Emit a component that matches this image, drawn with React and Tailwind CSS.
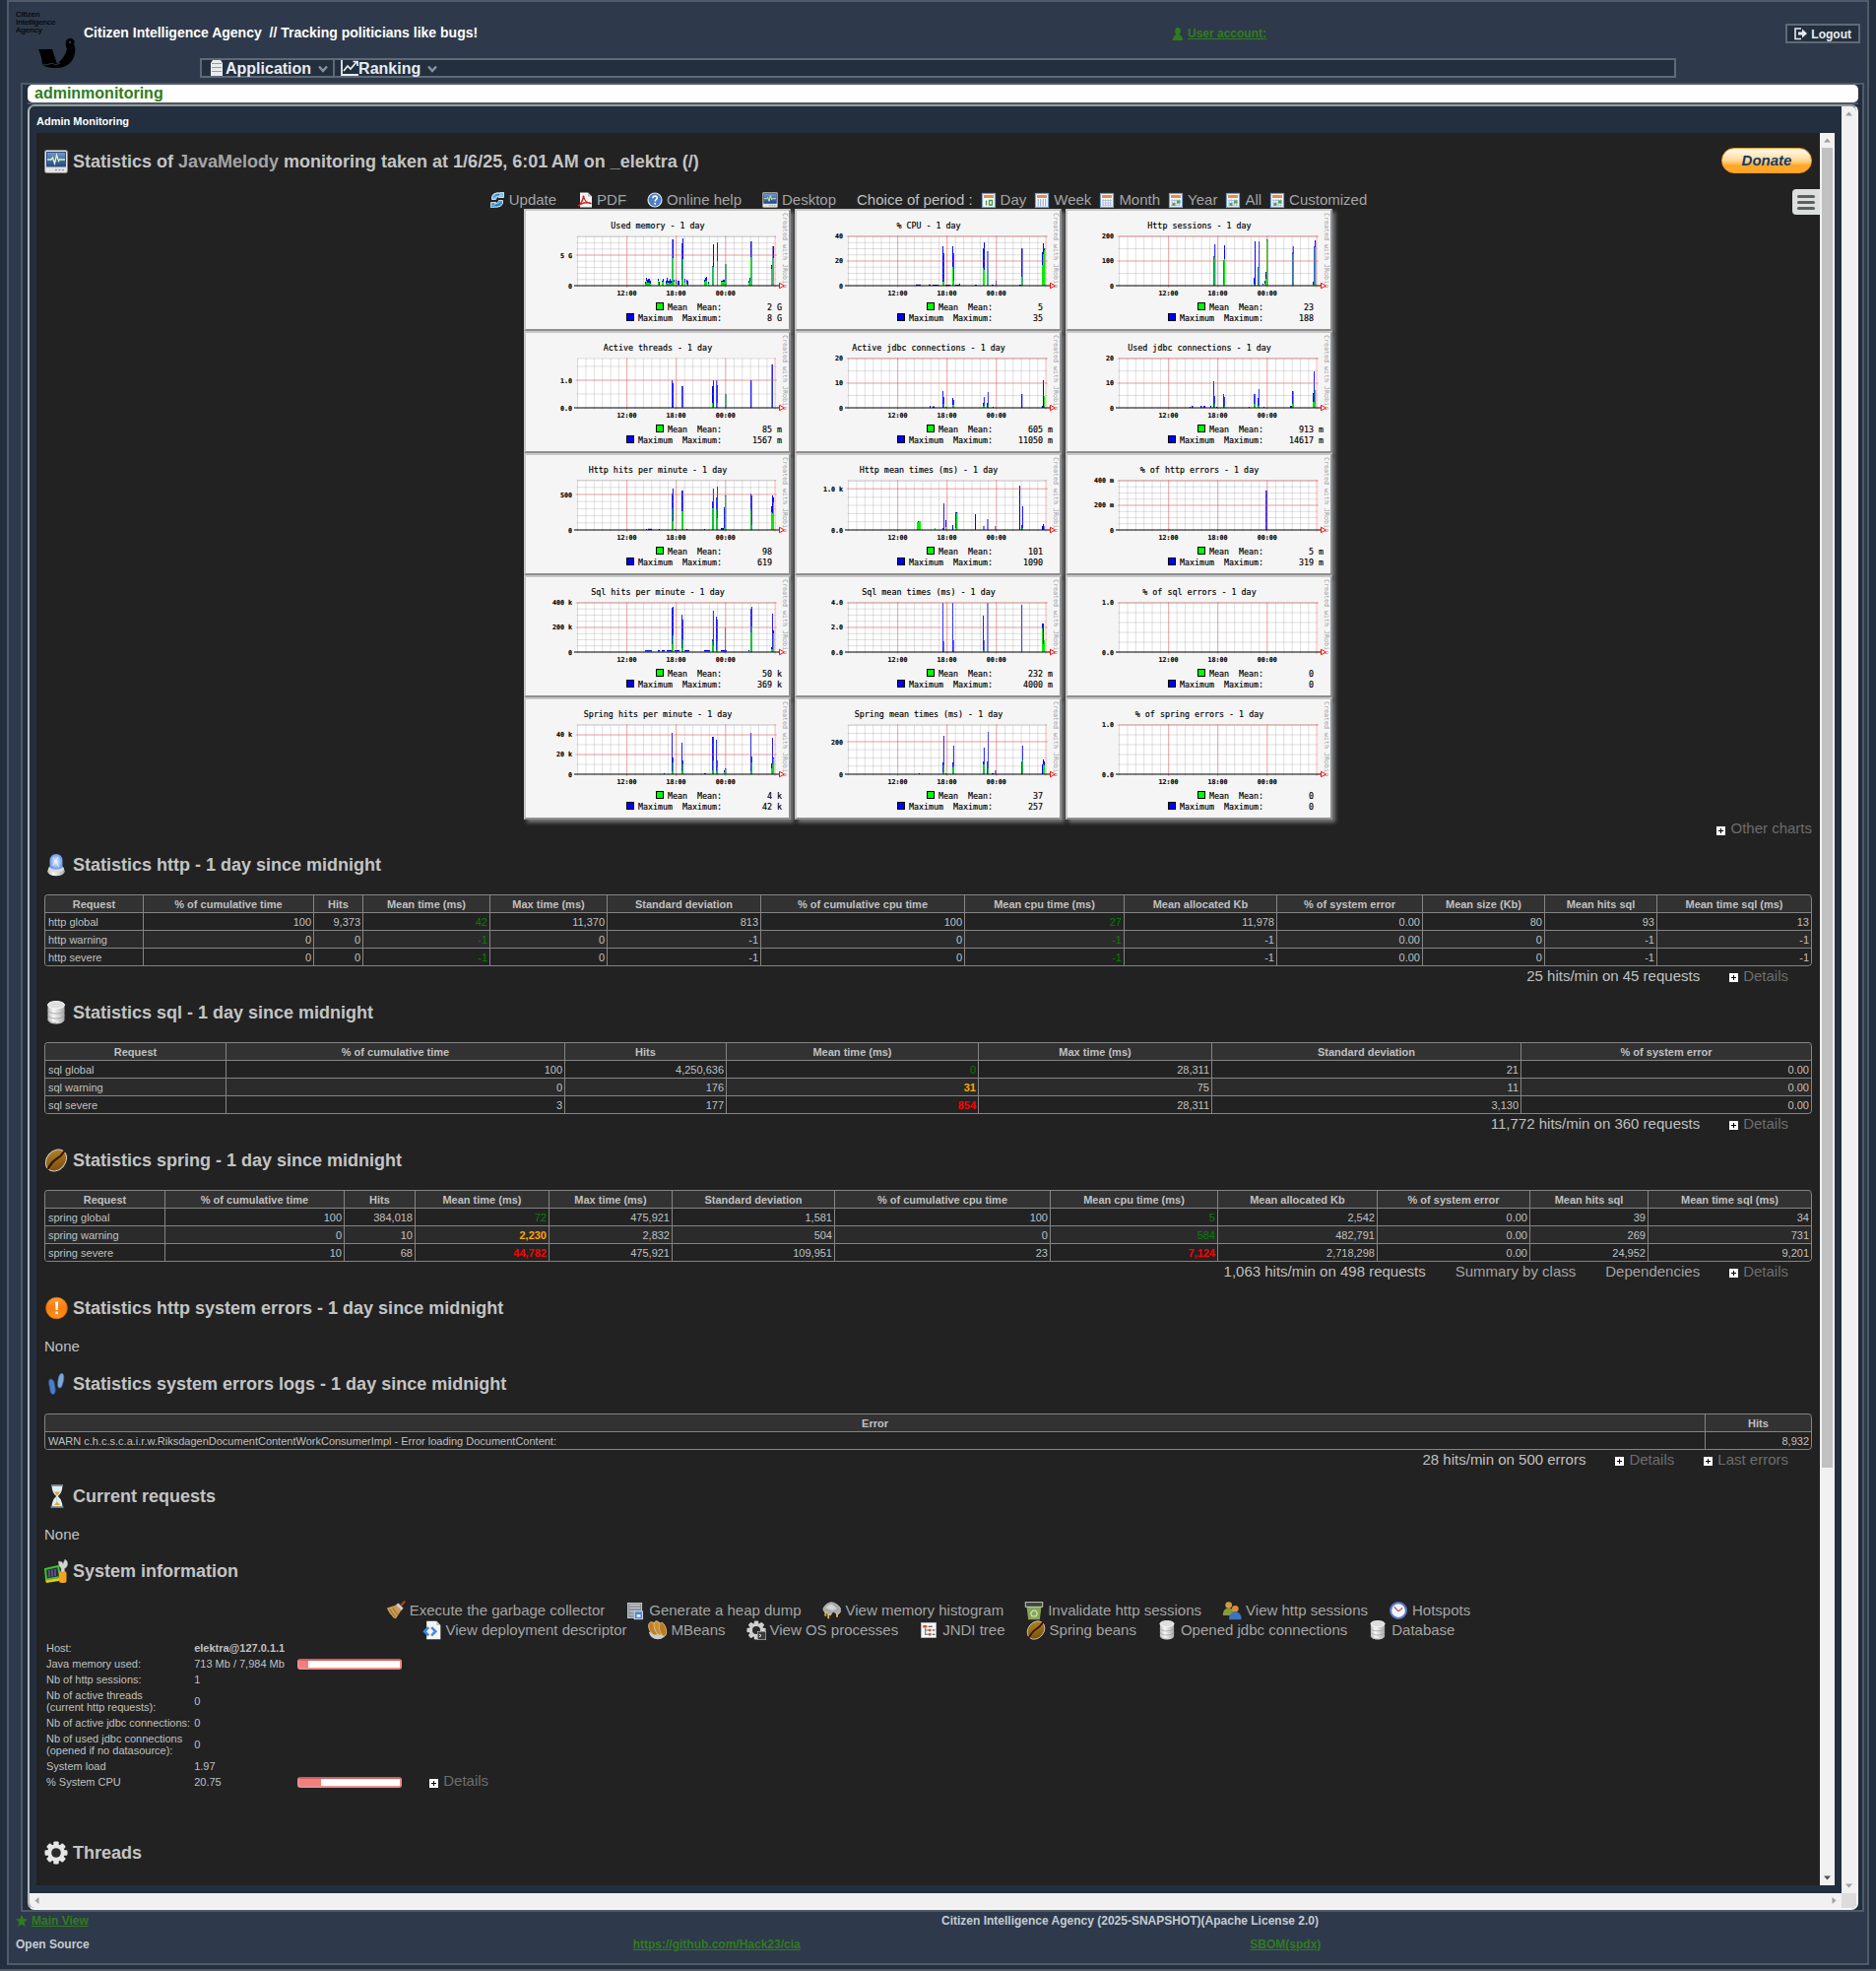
import React from "react";

/* ---------- icons ---------- */

const Svg = ({ className, box = "0 0 16 16", children }) => (
  <svg viewBox={box} className={className} aria-hidden="true">
    {children}
  </svg>
);

const Gradients = () => (
  <svg className="absolute h-0 w-0" aria-hidden="true">
    <defs>
      <linearGradient id="silver" x1="0" x2="1">
        <stop offset="0" stopColor="#bdbdbd" />
        <stop offset="0.35" stopColor="#f7f7f7" />
        <stop offset="1" stopColor="#a9a9a9" />
      </linearGradient>
      <linearGradient id="screen" x1="0" y1="0" x2="0" y2="1">
        <stop offset="0" stopColor="#6f9bd0" />
        <stop offset="1" stopColor="#1f4a86" />
      </linearGradient>
      <linearGradient id="bean" x1="0" y1="0" x2="1" y2="1">
        <stop offset="0" stopColor="#b98a2c" />
        <stop offset="1" stopColor="#6e4708" />
      </linearGradient>
      <linearGradient id="orange" x1="0" y1="0" x2="0" y2="1">
        <stop offset="0" stopColor="#ff9a3c" />
        <stop offset="0.5" stopColor="#f57c10" />
        <stop offset="1" stopColor="#ff9420" />
      </linearGradient>
      <radialGradient id="blueglow">
        <stop offset="0" stopColor="#eaf4ff" />
        <stop offset="1" stopColor="#6a9be8" />
      </radialGradient>
    </defs>
  </svg>
);

const MonitorIcon = ({ className }) => (
  <Svg className={className} box="0 0 24 24">
    <rect x="0.5" y="0.5" width="23" height="23" rx="2" fill="#e4e4e0" stroke="#8d8d8d" />
    <rect x="2.5" y="2.5" width="19" height="14.5" fill="url(#screen)" stroke="#2c4f86" />
    <path d="M3 10h4l1.5-2 2 6 2-8.500 2 6 1-1.500H21" fill="none" stroke="#e6f3b0" strokeWidth="1.300" />
    <path d="M11 20.500h2M14.500 20.500h2M18 20.500h2" stroke="#999" strokeWidth="1.500" />
  </Svg>
);

const UpdateIcon = ({ className }) => (
  <Svg className={className}>
    <path d="M2.500 7.500V4.500Q4 0.800 8 0.800h3.500L11.500 0 14.500 0v5.500H9l1.500-1.700Q7 3.800 6.500 7.500z" fill="#7cc4ee" stroke="#e8f6ff" strokeWidth="0.800" />
    <path d="M13.500 8.500v3Q12 15.200 8 15.200H4.500V16H1.500v-5.500H7l-1.500 1.700Q9 12.200 9.500 8.500z" fill="#4aa3dc" stroke="#e8f6ff" strokeWidth="0.800" />
    <path d="M4.500 5Q6 2.500 10 2.500M11.500 11Q10 13.500 6 13.500" fill="none" stroke="#17608f" strokeWidth="1" />
  </Svg>
);

const PdfIcon = ({ className }) => (
  <Svg className={className}>
    <path d="M3 0.500h8L15 4.500V15.500H3z" fill="#f4f4f4" />
    <path d="M11 0.500 15 4.500H11z" fill="#bdbdbd" />
    <path d="M1 14C4 12.500 6.500 7 6.500 3.500M6.500 3.500C7 8 10 11.500 14.500 11.500M1 14C4 11 10 9.800 14.500 11.500" fill="none" stroke="#d3201c" strokeWidth="1.400" />
  </Svg>
);

const HelpIcon = ({ className }) => (
  <Svg className={className}>
    <circle cx="8" cy="8" r="7" fill="#4d7fc4" stroke="#dfe8f5" strokeWidth="1.200" />
    <path d="M5.800 6.200Q6 4 8.200 4 10.400 4.100 10.300 6 10.200 7 9 7.800 8.200 8.400 8.200 9.500" fill="none" stroke="#fff" strokeWidth="1.600" />
    <circle cx="8.200" cy="11.800" r="1" fill="#fff" />
  </Svg>
);

const CalendarIcon = ({ className, kind }) => (
  <Svg className={className}>
    <rect x="1.500" y="1.500" width="13" height="14" fill="#fff" stroke="#6f9fd8" strokeWidth="1.200" />
    <rect x="3" y="3" width="10" height="3" fill="#f08a45" />
    {kind === "day" && <path d="M5.500 8.500v5M8.500 8.500h3v4.500h-3z" fill="none" stroke="#3d9a3d" strokeWidth="1.300" />}
    {kind === "week" && <path d="M4.200 7v7.500M6.700 7v7.500M9.200 7v7.500M11.700 7v7.500" stroke="#8fa9d4" strokeWidth="1.100" />}
    {(kind === "month" || kind === "year") && (
      <path d="M4.200 7v7.500M6.700 7v7.500M9.200 7v7.500M11.700 7v7.500M3 8.500h10M3 11h10M3 13.300h10" stroke="#a9bce0" strokeWidth="0.900" />
    )}
    {kind === "year" && <path d="M4.500 11h3v3h-3zM9 8.500h3.500v3H9z" fill="#53a753" />}
  </Svg>
);

const PlusIcon = () => (
  <Svg className="mt-1 h-[9px] w-[9px]" box="0 0 9 9">
    <rect width="9" height="9" fill="#fff" />
    <path d="M4.500 2v5M2 4.500h5" stroke="#000" strokeWidth="1" />
  </Svg>
);

const BeaconIcon = ({ className }) => (
  <Svg className={className} box="0 0 24 24">
    <ellipse cx="12" cy="18.500" rx="8.800" ry="4.800" fill="url(#silver)" />
    <ellipse cx="12" cy="16" rx="8" ry="3.800" fill="#dcdcdc" />
    <path d="M5.500 15V7.500Q6 1 12 1T18.500 7.500V15Q12 18.500 5.500 15z" fill="url(#blueglow)" />
    <path d="M9 4.500 15 14M14 4 8.500 13" stroke="#fff" strokeWidth="1" opacity="0.700" />
  </Svg>
);

const DatabaseIcon = ({ className }) => (
  <Svg className={className} box="0 0 24 24">
    <path d="M3.500 4v15.500Q5 23.500 12 23.500T20.500 19.500V4z" fill="url(#silver)" />
    <path d="M3.500 9.500Q5 13 12 13T20.500 9.500M3.500 14.500Q5 18 12 18T20.500 14.500M3.500 19Q5 22.500 12 22.500" fill="none" stroke="#9a9a9a" strokeWidth="0.800" />
    <ellipse cx="12" cy="4.200" rx="8.500" ry="3.700" fill="#dedede" stroke="#f7f7f7" />
  </Svg>
);

const BeanIcon = ({ className }) => (
  <Svg className={className} box="0 0 24 24">
    <ellipse cx="12" cy="12" rx="9.500" ry="12" transform="rotate(40 12 12)" fill="url(#bean)" stroke="#d9cbb8" strokeWidth="1" />
    <path d="M20.500 2.500Q17 8 12.500 10.500T3.500 21" fill="none" stroke="#3a1202" strokeWidth="2.200" />
  </Svg>
);

const AlertIcon = ({ className }) => (
  <Svg className={className} box="0 0 24 24">
    <circle cx="12.500" cy="12" r="10.800" fill="url(#orange)" stroke="#e06c00" strokeWidth="0.800" />
    <path d="M11 5.500h3.200l-.6 8.500h-2z" fill="#fff" />
    <rect x="11.300" y="15.500" width="2.600" height="2.600" fill="#fff" />
  </Svg>
);

const FootstepsIcon = ({ className }) => (
  <Svg className={className} box="0 0 24 24">
    <path d="M17 1.500c2.500-1 3.500 3 2.500 7-.8 3-1.500 8-4 7.500S13.500 11 14 8s1-5.500 3-6.500z" fill="#7ba7dc" stroke="#47689a" strokeWidth="0.700" />
    <path d="M6.500 7C4.500 7 4 10 5 13.500c.8 3 .5 8.500 3.500 9s3-4 2.500-7-.5-8-4.500-8.500z" fill="#4a7fc6" stroke="#28508a" strokeWidth="0.700" />
  </Svg>
);

const HourglassIcon = ({ className }) => (
  <Svg className={className} box="0 0 24 24">
    <path d="M7.500 1.500h11Q18 9 13.800 12 18 15 18.500 22.500h-11Q8 15 12.200 12 8 9 7.500 1.500z" fill="#dfeef5" />
    <path d="M10 7.500h6Q15 9.500 13 11.500 11 9.500 10 7.500zM13 17.500l3 3.500h-6z" fill="#d9a83a" />
    <path d="M12.500 12.500v5" stroke="#b9c8cf" strokeWidth="0.800" />
    <path d="M7 1h12M6.500 23h13" stroke="#8e9698" strokeWidth="1.400" />
  </Svg>
);

const SystemIcon = ({ className }) => (
  <Svg className={className} box="0 0 24 24">
    <path d="M1 10 14 7l2 11-14 2.500z" fill="#2b2b45" stroke="#3fc02c" strokeWidth="2" />
    <path d="M5 11v7M8 10.500v7M11 10v7" stroke="#7a6ba0" strokeWidth="1.200" />
    <path d="M1 21.500 15 19v3L2 24z" fill="#e5c81e" />
    <rect x="15" y="12" width="7.500" height="12" rx="2.500" fill="#f4a41c" />
    <path d="M14.500 2l3 .5 1.500 2L21 0q3.500 2 2.500 6-1 3-3 3.500V13h-3.500V9Q14 7 14.500 2z" fill="#d5d5d5" stroke="#999" strokeWidth="0.600" />
  </Svg>
);

const GearIcon = ({ className, fill = "#e6e6e6" }) => (
  <Svg className={className} box="0 0 24 24">
    {[0, 45, 90, 135].map((a) => (
      <rect key={a} x="9.300" y="0.500" width="5.400" height="23" rx="1.200" fill={fill} transform={`rotate(${a} 12 12)`} />
    ))}
    <circle cx="12" cy="12" r="6.800" fill="none" stroke={fill} strokeWidth="4" />
    <circle cx="12" cy="12" r="4.800" fill="#2a2a2a" />
  </Svg>
);

const BroomIcon = ({ className }) => (
  <Svg className={className} box="0 0 24 24">
    <path d="M1 9 13 5l6 6-7 11q-3 0-5-4-3-2-6-9z" fill="#c99a55" />
    <path d="M4 10l7 10M8 8.500l6 9" stroke="#8a6026" strokeWidth="1" />
    <path d="M12 5l3-2 6 6-2 3z" fill="#cfcfcf" />
    <path d="M18 6l5-5" stroke="#b0451c" strokeWidth="2.600" />
  </Svg>
);

const HeapIcon = ({ className }) => (
  <Svg className={className} box="0 0 24 24">
    <rect x="3" y="3" width="17" height="18" fill="#8d949e" stroke="#d9d9d9" />
    <path d="M5 5.500h13M5 9h13M5 13h6M5 17h5" stroke="#c8c8c8" strokeWidth="1.300" />
    <rect x="11" y="13" width="10" height="9.500" fill="#4e86d6" stroke="#e6eefb" />
    <rect x="14" y="17" width="4.500" height="3" fill="#fff" />
  </Svg>
);

const MemoryIcon = ({ className }) => (
  <Svg className={className} box="0 0 24 24">
    <path d="M4 13v6M7.500 15v7M18 14v6" stroke="#e8b93a" strokeWidth="2.200" />
    <path d="M1 10Q4 3 11 2 18 3 22 9v5l-3 3-6-4-3 5-8-5z" fill="#a9a9a9" stroke="#dcdcdc" strokeWidth="0.800" />
    <path d="M4 9Q8 4 12 4.500L18 9.500 12 12z" fill="#d3d3d3" />
  </Svg>
);

const BinIcon = ({ className }) => (
  <Svg className={className} box="0 0 24 24">
    <path d="M3 7h18l-2 16H5z" fill="#87a558" />
    <rect x="1.500" y="2" width="21" height="5.500" fill="#3e4438" stroke="#dfe3d8" />
    <path d="M9.500 19 8 15.500 10.500 12h3.500l2 3.500-1.500 3.500z" fill="none" stroke="#cfe2b0" strokeWidth="1.500" />
  </Svg>
);

const UsersIcon = ({ className }) => (
  <Svg className={className} box="0 0 24 24">
    <circle cx="8" cy="5.500" r="4" fill="#d69a3c" />
    <path d="M1 18q0-9 7-9t7 9z" fill="#8a9a3a" />
    <circle cx="16" cy="10" r="4" fill="#d98f34" />
    <path d="M8.500 23q0-9.500 7.500-9.500t7.500 9.500z" fill="#3d74bd" />
  </Svg>
);

const ClockIcon = ({ className }) => (
  <Svg className={className} box="0 0 24 24">
    <circle cx="12" cy="12" r="9.500" fill="#f3f5fb" stroke="#5b78cc" strokeWidth="2.500" />
    <path d="M12 13 7 7.500M12 13l5-4" stroke="#b35a62" strokeWidth="1.500" />
  </Svg>
);

const DeployIcon = ({ className }) => (
  <Svg className={className} box="0 0 24 24">
    <path d="M5 1h12l5 5v17H5z" fill="#f4f4f4" />
    <path d="M17 1l5 5h-5z" fill="#c2c2c2" />
    <path d="M7.500 8.500l-5 5 5 5M11 8.500l5 5-5 5" fill="none" stroke="#3f8ae0" strokeWidth="3" />
  </Svg>
);

const MBeansIcon = ({ className }) => (
  <Svg className={className} box="0 0 24 24">
    <path d="M1 14h22q-2 9-11 9T1 14z" fill="#c9ccd2" />
    <ellipse cx="6.500" cy="10" rx="5" ry="8.500" transform="rotate(-25 6.500 10)" fill="#b9812e" stroke="#e2b76a" />
    <ellipse cx="12.500" cy="9.500" rx="4.500" ry="9" transform="rotate(-20 12.500 9.500)" fill="#c48e38" stroke="#ecc479" />
    <ellipse cx="18" cy="11" rx="4" ry="8.500" transform="rotate(-14 18 11)" fill="#b57c29" stroke="#e2b76a" />
  </Svg>
);

const ProcessIcon = ({ className }) => (
  <span className="relative inline-block">
    <GearIcon className={className} fill="#cfcfcf" />
    <svg viewBox="0 0 9 9" className="absolute right-0 bottom-0 h-[9px] w-[9px]" aria-hidden="true">
      <rect width="9" height="9" fill="#3a3a3a" stroke="#ddd" />
      <path d="M2 3l2 1.500L2 6" fill="none" stroke="#fff" />
    </svg>
  </span>
);

const TreeIcon = ({ className }) => (
  <Svg className={className} box="0 0 24 24">
    <rect x="3" y="3" width="18" height="18" fill="#f7f7f7" stroke="#bbb" />
    <path d="M8 9v9M8 12h4M8 17h4" stroke="#555" strokeWidth="1" />
    <path d="M5 6h5v3H5zM12 10.500h3v3h-3zM12 15.500h3v3h-3z" fill="#d2552c" />
    <path d="M11.500 7.500h5M16.500 12h3M16.500 17h3" stroke="#333" strokeWidth="1.300" />
  </Svg>
);

const Logo = () => (
  <svg viewBox="0 0 62 62" className="h-[62px] w-[62px] shrink-0" role="img" aria-label="Citizen Intelligence Agency">
    <g fontFamily="Liberation Sans" fontSize="8" fill="#05070a" stroke="#05070a" strokeWidth="0.200">
      <text x="0" y="8">Citizen</text>
      <text x="0" y="16">Intelligence</text>
      <text x="0" y="24">Agency</text>
    </g>
    <path d="M23 41h14l5 15q8-7 10-15-2-4-1-8 2-4 6-3 4 2 2 6 2 3 1 9-1 6-5 10-5 5-14 5-12 0-14-4-1-9-4-15z" fill="#000" />
    <path d="M28 56q3 2 6 0t7 1l4-2" fill="none" stroke="#3c4856" strokeWidth="0.800" />
    <circle cx="55" cy="34" r="0.900" fill="#4a5666" />
  </svg>
);

/* ---------- charts ---------- */

// Bars are [x, width, height of maximum, height of mean], in pixels above the axis.
const CHARTS = [
  {
    title: "Used memory - 1 day", axis: [["5 G", 31], ["0", 0]], major: [31], step: 6.2, mean: ["2", "G"], max: ["8", "G"],
    bars: [[123, 1, 4, 2], [124, 1, 8, 5], [125, 1, 6, 3], [126, 2, 7, 3], [128, 1, 5, 2], [136, 1, 7, 5], [137, 1, 4, 1], [140, 1, 5, 4], [141, 1, 7, 4], [144, 1, 5, 2], [145, 1, 8, 3], [146, 2, 5, 3], [148, 1, 7, 2], [149, 2, 5, 3], [150.500, 1.500, 47, 28], [152, 1, 6, 4], [154, 1, 6, 2], [156, 2, 5, 1], [160.200, 0.800, 43, 6], [161, 1, 48, 27], [163, 1, 7, 3], [165, 1, 6, 2], [166, 1, 5, 1], [183, 1, 6, 4], [184, 1, 8, 5], [185, 1, 9, 5], [187, 1, 4, 2], [191, 0.700, 20, 19], [192, 1, 42, 19], [196, 1, 44, 25], [200, 2, 5, 4], [202, 2, 6, 4], [204.500, 1, 22, 22], [228, 1, 5, 3], [229, 1, 8, 5], [230, 1.500, 45, 29], [251, 1, 21, 17], [252.500, 1.500, 40, 28]],
  },
  {
    title: "% CPU - 1 day", axis: [["40", 50], ["20", 25], ["0", 0]], major: [25, 50], step: 6.25, mean: ["5", ""], max: ["35", ""],
    bars: [[123, 5, 1.200, 0], [136, 2, 1.200, 0], [140, 6, 1, 0], [150, 1, 40, 4], [151, 0.800, 33, 4], [153, 5, 1, 0], [160, 1, 40, 19], [161, 0.800, 33, 5], [163, 4, 1, 0], [167, 1, 2, 0], [183, 2, 1, 0], [191, 1, 38, 18], [192, 1, 44, 16], [195.500, 1, 35, 13], [200, 2, 1, 0], [204.300, 0.700, 5, 0], [228, 2, 1, 0], [230, 1.500, 38, 9], [251, 1, 34, 21], [252, 1, 43, 32], [253, 1.200, 38, 36]],
  },
  {
    title: "Http sessions - 1 day", axis: [["200", 50], ["100", 25], ["0", 0]], major: [25, 50], step: 12.5, mean: ["23", ""], max: ["188", ""],
    bars: [[150.300, 0.900, 30, 0], [151.200, 1, 42, 29], [160.300, 0.900, 26, 2], [161, 1, 41, 27], [191, 1, 8, 2], [192, 1, 45, 0], [195.300, 0.900, 19, 1], [196.200, 0.900, 45, 18], [200, 1, 2, 1], [202, 1, 5, 2], [203, 1, 14, 7], [204, 1.300, 47, 46], [230, 0.700, 34, 0], [230.700, 1, 40, 32], [251, 1, 4, 1], [252.300, 1, 40, 2], [253.100, 1.100, 46, 39]],
  },
  {
    title: "Active threads - 1 day", axis: [["1.0", 28], ["0.0", 0]], major: [28], step: 14, mean: ["85", "m"], max: ["1567", "m"],
    bars: [[150.200, 1, 28, 0], [151, 0.900, 25, 0], [160.200, 1.500, 22, 1], [191, 1, 22, 5], [192, 0.900, 28, 0], [195.300, 0.900, 28, 0], [196.100, 0.900, 23, 5], [204.500, 1, 14, 13], [230, 1.300, 28, 0], [251.500, 1, 44, 29], [252.300, 0.700, 44, 0]],
  },
  {
    title: "Active jdbc connections - 1 day", axis: [["20", 50], ["10", 25], ["0", 0]], major: [25, 50], step: 12.5, mean: ["605", "m"], max: ["11050", "m"],
    bars: [[137, 1, 2, 0], [140, 2, 1.500, 0], [150, 0.900, 17, 0], [150.900, 0.900, 11, 4], [153, 1, 1, 0], [160, 1, 10, 3], [161, 0.800, 8, 3], [191, 0.900, 5, 2], [191.900, 0.900, 11, 2], [195, 0.900, 5, 0], [195.900, 0.900, 16, 2], [201, 1, 1, 0], [230, 1.300, 14, 0], [251, 1, 2, 0], [252, 1, 28, 0], [253, 1, 12, 12]],
  },
  {
    title: "Used jdbc connections - 1 day", axis: [["20", 50], ["10", 25], ["0", 0]], major: [25, 50], step: 12.5, mean: ["913", "m"], max: ["14617", "m"],
    bars: [[126, 1, 1, 0], [128, 1.500, 2, 0], [137, 1.500, 2, 0], [140, 2, 2, 0], [147, 1, 2, 0], [150, 0.900, 27, 0], [150.900, 0.900, 12, 4], [153, 1, 1, 0], [160, 0.900, 14, 0], [160.900, 0.900, 11, 2], [186, 1, 1, 0], [191.200, 1.500, 14, 4], [195, 0.900, 10, 2], [195.900, 0.900, 19, 2], [201, 1, 1, 0], [228, 2, 2, 0], [230, 1.500, 17, 4], [251, 1, 15, 6], [252, 0.900, 37, 6], [252.900, 1.200, 18, 18]],
  },
  {
    title: "Http hits per minute - 1 day", axis: [["500", 36], ["0", 0]], major: [36], step: 7.2, mean: ["98", ""], max: ["619", ""],
    bars: [[124, 1, 1, 0], [126, 4, 1.200, 0], [137, 1, 1, 0], [150.100, 0.800, 37, 21], [150.900, 1, 42, 9], [153, 1, 1, 0], [160, 1.700, 40, 19], [165, 1, 1, 0], [183, 1, 1, 0], [191, 0.900, 29, 22], [191.900, 0.900, 42, 22], [195.200, 0.800, 33, 21], [196, 0.900, 44, 12], [200, 3, 2, 0], [203, 0.900, 23, 2], [204, 1.200, 35, 34], [230, 0.900, 37, 20], [230.900, 0.900, 35, 5], [251, 1, 24, 18], [252, 1, 35, 17], [253, 1, 33, 28]],
  },
  {
    title: "Http mean times (ms) - 1 day", axis: [["1.0 k", 42], ["0.0", 0]], major: [42], step: 8.3, mean: ["101", ""], max: ["1090", ""],
    bars: [[124, 1, 8, 8], [125, 1, 9, 8], [126, 2, 8.500, 8], [142, 1, 2, 2], [150.200, 0.900, 2, 0], [151, 0.900, 27, 0], [153, 1, 10, 3], [160, 1, 5, 0], [163, 1, 18, 2], [164, 1.200, 18, 17], [183, 1, 16, 0], [191.500, 1, 4, 0], [195.500, 1, 11, 0], [203.500, 0.800, 4, 0], [228, 1, 45, 0], [230, 0.900, 5, 0], [231, 0.900, 24, 2], [251, 2.500, 4, 0], [252, 1, 6, 0]],
  },
  {
    title: "% of http errors - 1 day", axis: [["400 m", 50], ["200 m", 25], ["0", 0]], major: [25, 50], step: 6.25, mean: ["5", "m"], max: ["319", "m"],
    bars: [[203.200, 1.600, 40, 0]],
  },
  {
    title: "Sql hits per minute - 1 day", axis: [["400 k", 50], ["200 k", 25], ["0", 0]], major: [25, 50], step: 6.25, mean: ["50", "k"], max: ["369", "k"],
    bars: [[123, 7, 2, 1.200], [136, 2, 2, 1], [140, 3, 2, 1], [145, 5, 2, 1], [150, 0.900, 45, 8], [150.900, 1, 46, 17], [153, 5, 2, 1], [160, 0.900, 38, 4], [160.900, 0.900, 33, 12], [163, 5, 2, 1], [183, 6, 2, 1], [191, 0.900, 13, 11], [191.900, 0.900, 42, 6], [195, 0.900, 36, 2], [195.900, 0.900, 33, 11], [200, 6, 2, 1], [204.200, 0.600, 25, 0], [228, 1, 2, 1], [230, 0.900, 44, 20], [230.900, 0.900, 46, 26], [251, 1, 5, 3], [252, 0.900, 39, 3], [252.900, 1.200, 22, 19]],
  },
  {
    title: "Sql mean times (ms) - 1 day", axis: [["4.0", 50], ["2.0", 25], ["0.0", 0]], major: [25, 50], step: 6.25, mean: ["232", "m"], max: ["4000", "m"],
    bars: [[150, 0.800, 50, 0], [150.800, 0.800, 11, 0], [160, 0.800, 50, 0], [160.800, 0.800, 12, 0], [191, 0.900, 37, 2], [191.900, 0.700, 12, 2], [195.500, 0.900, 50, 0], [230.200, 0.900, 48, 0], [251, 1, 29, 24], [252, 1, 29, 8], [253, 1, 12, 12]],
  },
  { title: "% of sql errors - 1 day", axis: [["1.0", 50], ["0.0", 0]], major: [50], step: 10, mean: ["0", ""], max: ["0", ""], bars: [] },
  {
    title: "Spring hits per minute - 1 day", axis: [["40 k", 40], ["20 k", 20], ["0", 0]], major: [20, 40], step: 10, mean: ["4", "k"], max: ["42", "k"],
    bars: [[142, 1, 1, 0], [150, 0.900, 42, 3], [150.900, 0.900, 17, 12], [160, 0.900, 32, 3], [160.900, 0.900, 14, 10], [183, 2, 1, 0], [191, 0.900, 38, 4], [191.900, 0.900, 38, 14], [195.200, 0.800, 35, 3], [196, 0.800, 14, 7], [203, 1, 4, 2], [204, 1.300, 6, 5], [230, 0.900, 42, 3], [230.900, 0.900, 18, 12], [251, 1, 11, 6], [252, 0.900, 37, 10], [252.900, 1.200, 17, 16]],
  },
  {
    title: "Spring mean times (ms) - 1 day", axis: [["200", 33], ["0", 0]], major: [33], step: 8.3, mean: ["37", ""], max: ["257", ""],
    bars: [[126, 1, 1, 0], [150, 0.900, 12, 2], [150.900, 0.900, 39, 9], [153, 1, 1, 0], [160, 0.900, 12, 7], [160.900, 0.900, 29, 8], [191, 0.900, 13, 10], [191.900, 0.900, 27, 10], [195, 0.800, 13, 0], [196, 0.800, 43, 6], [200, 2, 1, 0], [203.500, 1, 4, 0], [230, 0.900, 13, 0], [230.900, 0.900, 29, 14], [251, 1, 10, 0], [252, 1, 15, 10], [253, 1, 13, 9]],
  },
  { title: "% of spring errors - 1 day", axis: [["1.0", 50], ["0.0", 0]], major: [50], step: 10, mean: ["0", ""], max: ["0", ""], bars: [] },
];

const u = (px) => px * 1.2;
const BASE = 78;

function Label({ x, y, anchor = "start", size = 10, bold, children }) {
  return (
    <text x={u(x)} y={u(y)} textAnchor={anchor} fontSize={size} fontWeight={bold ? 700 : 400} fill="#000" stroke="#000" strokeWidth="0.200" xmlSpace="preserve">
      {children}
    </text>
  );
}

function Chart({ chart }) {
  const minors = [];
  for (let h = chart.step; h <= 50.5; h += chart.step) minors.push(h);
  return (
    <a
      href="#chart"
      className="block border-2 border-t-[#c8c8c8] border-r-[#909090] border-b-[#909090] border-l-[#c8c8c8] bg-[#f5f5f5] shadow-[3px_3px_4px_#777]"
    >
      <svg viewBox="2.4 2.4 320.4 144" className="block h-[120px] w-[267px]" fontFamily="'DejaVu Sans Mono', monospace" role="img" aria-label={chart.title}>
        <g transform="scale(1.2)">
          <rect x="55" y="28" width="200" height="50" fill="#fff" />
          {chart.bars.map(([x, w, max, mean], i) => (
            <g key={i}>
              <rect x={x} y={BASE - max} width={w} height={max} fill="#0000ff" />
              <rect x={x} y={BASE - mean} width={w} height={mean} fill="#00f000" />
            </g>
          ))}
          <g stroke="#8c8c8c" strokeOpacity="0.350" strokeWidth="0.800">
            {Array.from({ length: 24 }, (_, i) => (
              <line key={i} x1={54.6 + i * 8.36} x2={54.6 + i * 8.36} y1="28" y2="79.500" />
            ))}
            {minors.map((h) => (
              <line key={h} x1="53.500" x2="256.500" y1={BASE - h} y2={BASE - h} />
            ))}
            <line x1="54" x2="256" y1="28" y2="28" />
          </g>
          <g stroke="#ff3c3c" strokeOpacity="0.400" strokeWidth="0.900">
            {[104.6, 154.6, 204.7, 255].map((x) => (
              <line key={x} x1={x} x2={x} y1="27" y2="80" />
            ))}
            {chart.major.map((h) => (
              <line key={h} x1="52.500" x2="257" y1={BASE - h} y2={BASE - h} />
            ))}
          </g>
          <line x1="51" x2="259" y1={BASE} y2={BASE} stroke="#000" strokeWidth="1" />
          <path d="M259.500 75.300 264.500 78 259.500 80.700z" fill="#fff" stroke="#f00" strokeWidth="1" />
          <rect x="134.500" y="95.500" width="7" height="7" fill="#0f0" stroke="#000" />
          <rect x="104.500" y="106.500" width="7" height="7" fill="#00f" stroke="#000" />
        </g>
        <Label x={136} y={20} anchor="middle">{chart.title}</Label>
        {chart.axis.map(([text, h]) => (
          <Label key={text} x={49} y={BASE + 2.5 - h} anchor="end" size={8} bold>{text}</Label>
        ))}
        <Label x={104.6} y={88} anchor="middle" size={8} bold>12:00</Label>
        <Label x={154.6} y={88} anchor="middle" size={8} bold>18:00</Label>
        <Label x={204.7} y={88} anchor="middle" size={8} bold>00:00</Label>
        <Label x={146} y={103}>Mean</Label>
        <Label x={176} y={103}>Mean:</Label>
        <Label x={252} y={103} anchor="end">{chart.mean[0]}</Label>
        <Label x={257} y={103}>{chart.mean[1]}</Label>
        <Label x={116} y={114}>Maximum</Label>
        <Label x={161} y={114}>Maximum:</Label>
        <Label x={252} y={114} anchor="end">{chart.max[0]}</Label>
        <Label x={257} y={114}>{chart.max[1]}</Label>
        <text transform={`translate(${u(262.5)} ${u(4)}) rotate(90)`} fontSize="8" fill="#a0a0a0">Created with JRobin</text>
      </svg>
    </a>
  );
}

/* ---------- statistics tables ---------- */

const LEVEL = { g: "text-[#008000]", o: "font-bold text-[#ffa500]", r: "font-bold text-[#ff0000]" };

const HTTP = {
  widths: [100, 173, 50, 129, 119, 156, 207, 162, 155, 148, 124, 114, 157],
  head: ["Request", "% of cumulative time", "Hits", "Mean time (ms)", "Max time (ms)", "Standard deviation", "% of cumulative cpu time", "Mean cpu time (ms)", "Mean allocated Kb", "% of system error", "Mean size (Kb)", "Mean hits sql", "Mean time sql (ms)"],
  rows: [
    ["http global", "100", "9,373", "g:42", "11,370", "813", "100", "g:27", "11,978", "0.00", "80", "93", "13"],
    ["http warning", "0", "0", "g:-1", "0", "-1", "0", "g:-1", "-1", "0.00", "0", "-1", "-1"],
    ["http severe", "0", "0", "g:-1", "0", "-1", "0", "g:-1", "-1", "0.00", "0", "-1", "-1"],
  ],
};

const SQL = {
  widths: [184, 344, 164, 256, 237, 314, 295],
  head: ["Request", "% of cumulative time", "Hits", "Mean time (ms)", "Max time (ms)", "Standard deviation", "% of system error"],
  rows: [
    ["sql global", "100", "4,250,636", "g:0", "28,311", "21", "0.00"],
    ["sql warning", "0", "176", "o:31", "75", "11", "0.00"],
    ["sql severe", "3", "177", "r:854", "28,311", "3,130", "0.00"],
  ],
};

const SPRING = {
  widths: [122, 182, 72, 136, 125, 165, 219, 170, 162, 155, 120, 166],
  head: ["Request", "% of cumulative time", "Hits", "Mean time (ms)", "Max time (ms)", "Standard deviation", "% of cumulative cpu time", "Mean cpu time (ms)", "Mean allocated Kb", "% of system error", "Mean hits sql", "Mean time sql (ms)"],
  rows: [
    ["spring global", "100", "384,018", "g:72", "475,921", "1,581", "100", "g:5", "2,542", "0.00", "39", "34"],
    ["spring warning", "0", "10", "o:2,230", "2,832", "504", "0", "g:584", "482,791", "0.00", "269", "731"],
    ["spring severe", "10", "68", "r:44,782", "475,921", "109,951", "23", "r:7,124", "2,718,298", "0.00", "24,952", "9,201"],
  ],
};

const LOGS = {
  widths: [1686, 108],
  head: ["Error", "Hits"],
  rows: [["WARN c.h.c.s.c.a.i.r.w.RiksdagenDocumentContentWorkConsumerImpl - Error loading DocumentContent:", "8,932"]],
};

function StatTable({ data, label }) {
  const total = data.widths.reduce((a, b) => a + b, 0);
  return (
    <table aria-label={label} className="w-full table-fixed border-separate border-spacing-0 overflow-hidden rounded-[4px] border-t border-l border-[#848484] text-[11px] leading-4">
      <colgroup>
        {data.widths.map((w, i) => (
          <col key={i} style={{ width: `${(w / total) * 100}%` }} />
        ))}
      </colgroup>
      <thead>
        <tr className="bg-[#323232]">
          {data.head.map((h, i) => (
            <th key={h} scope="col" className={`border-r border-b border-[#848484] px-0 pt-px pb-0 font-bold whitespace-nowrap ${i === data.head.length - 1 ? "rounded-tr-[4px]" : ""}`}>{h}</th>
          ))}
        </tr>
      </thead>
      <tbody>
        {data.rows.map((row, r) => (
          <tr key={row[0]} className="even:bg-[#2b2b2b]">
            {row.map((cell, i) => {
              const level = cell[1] === ":" ? cell[0] : "";
              const corner = r === data.rows.length - 1 && i === row.length - 1 ? "rounded-br-[4px]" : "";
              return (
                <td key={i} className={`border-r border-b border-[#848484] pt-px pr-0.5 pb-0 pl-[3px] whitespace-nowrap ${i ? "text-right" : "text-left"} ${corner} ${level ? LEVEL[level] : ""}`}>
                  {level ? cell.slice(2) : cell}
                </td>
              );
            })}
          </tr>
        ))}
      </tbody>
    </table>
  );
}

const Heading = ({ icon: Icon, children }) => (
  <h2 className="mb-0.5 flex h-14 items-center gap-[5px] text-[18px] font-bold text-[#c4c4c4]">
    <Icon className="h-6 w-6" />
    {children}
  </h2>
);

const Toggle = ({ children }) => (
  <a href="#details" className="flex items-center gap-[5px] text-[#6d6d6d]">
    <PlusIcon />
    {children}
  </a>
);

const FootLine = ({ children }) => <div className="flex h-[19px] items-center justify-end gap-[30px] pr-6">{children}</div>;

const Tool = ({ icon: Icon, children, kind }) => (
  <a href="#tool" className="flex items-center gap-1 text-[#a4a4a4]">
    <Icon className="h-4 w-4" kind={kind} />
    {children}
  </a>
);

const SystemLink = ({ icon: Icon, children }) => (
  <a href="#system" className="flex items-center gap-1 text-[#a4a4a4]">
    <Icon className="block h-5 w-5" />
    {children}
  </a>
);

const Meter = ({ value, label }) => (
  <div role="meter" aria-label={label} aria-valuenow={value} className="h-[11px] w-[106px] overflow-hidden rounded-[3px] border-2 border-[#f08c8c] border-t-[#d65c5c] bg-white">
    <div className="h-full bg-[#f27e7e]" style={{ width: `${value}%` }} />
  </div>
);

const INFO = [
  [["Java memory used:"], "713 Mb / 7,984 Mb", 9],
  [["Nb of http sessions:"], "1"],
  [["Nb of active threads", "(current http requests):"], "0"],
  [["Nb of active jdbc connections:"], "0"],
  [["Nb of used jdbc connections", "(opened if no datasource):"], "0"],
  [["System load"], "1.97"],
];

const Arrow = ({ d, fill = "#a0a0a0" }) => (
  <svg viewBox="0 0 15 15" className="h-[15px] w-[15px] shrink-0" aria-hidden="true">
    <path d={d} fill={fill} />
  </svg>
);
const UP = "M4 9.500h7L7.500 5.500z";
const DOWN = "M4 5.500h7L7.500 9.500z";
const LEFT = "M9.500 4v7L5.500 7.500z";
const RIGHT = "M5.500 4v7L9.500 7.500z";

function MenuButton({ icon, label }) {
  return (
    <button type="button" className="flex items-center text-base leading-4 font-bold text-[#e8ecf0]">
      {icon}
      <span className="pt-0.5">{label}</span>
      <svg viewBox="0 0 10 8" className="mt-0.5 ml-[7px] h-2 w-2.5" aria-hidden="true">
        <path d="M1 1.500 5 6l4-4.500" fill="none" stroke="#8a949c" strokeWidth="2.400" />
      </svg>
    </button>
  );
}

function Header() {
  return (
    <header className="flex h-[82px] pt-[7px] pr-[7px] pl-[7px]">
      <Logo />
      <div className="flex-1 pl-[7px]">
        <div className="grid h-[50px] grid-cols-[1105fr_699fr] items-center">
          <h1 className="pb-0.5 text-[14px] font-bold whitespace-pre text-white">Citizen Intelligence Agency  // Tracking politicians like bugs!</h1>
          <div className="flex items-center justify-between text-[12px] font-bold">
            <a href="#account" className="flex items-center gap-1 text-[#2f7d1c]">
              <svg viewBox="0 0 12 13" className="h-[13px] w-3" aria-hidden="true">
                <path d="M6 0q2.800 0 2.800 3.500 0 2.500-1.300 4Q11 8 11 13H1q0-5 3.500-5.500-1.300-1.500-1.300-4Q3.200 0 6 0z" fill="#2f7d1c" />
              </svg>
              <span className="underline">User account:</span>
            </a>
            <button type="button" className="flex h-5 items-center gap-1 border-2 border-[#5f6a75] bg-[#232f3f] px-[7px] font-bold text-[#e8ecf0]">
              <svg viewBox="0 0 13 13" className="h-[13px] w-[13px]" aria-hidden="true">
                <path d="M7 1H1v10.500h6" fill="none" stroke="#e8ecf0" strokeWidth="1.600" />
                <path d="M4 4.500h4V1.500L13 6 8 10.500V7.500H4z" fill="#e8ecf0" />
              </svg>
              <span className="pt-0.5 leading-4">Logout</span>
            </button>
          </div>
        </div>
        <nav className="mr-[187px] ml-[118px] flex h-5 items-stretch border-2 border-[#5f6a75] bg-[#232f3f]">
          <div className="flex border-r-2 border-[#5f6a75] pr-[5px] pl-[9px]">
            <MenuButton
              label="Application"
              icon={
                <svg viewBox="0 0 12 16" className="mr-[3px] h-4 w-3" aria-hidden="true">
                  <path d="M2 0h8l2 3v13H0V3z" fill="#e8ecf0" />
                  <path d="M1 3.500h10M1 7.500h10M1 11.500h10" stroke="#8a949c" strokeWidth="0.900" />
                </svg>
              }
            />
          </div>
          <div className="flex pl-[6px]">
            <MenuButton
              label="Ranking"
              icon={
                <svg viewBox="0 0 18 16" className="h-4 w-[18px]" aria-hidden="true">
                  <path d="M1 0v15h17" fill="none" stroke="#e8ecf0" strokeWidth="1.800" />
                  <path d="M3 11 7 6l3 3 6-7M12.500 1.500H17V6" fill="none" stroke="#e8ecf0" strokeWidth="1.700" />
                </svg>
              }
            />
          </div>
        </nav>
      </div>
    </header>
  );
}

function Report() {
  return (
    <div className="relative min-w-0 flex-1 bg-[#222222] pr-2 pb-[3px] pl-2 text-[15px] leading-[18px] text-[#c0c0c0]">
      <div className="flex h-[58px] items-center justify-between">
        <h2 className="flex items-center gap-[5px] text-[18px] font-bold text-[#c4c4c4]">
          <MonitorIcon className="h-6 w-6" />
          <span>
            Statistics of <a href="#javamelody" className="text-[#a4a4a4]">JavaMelody</a> monitoring taken at 1/6/25, 6:01{"\u202f"}AM on _elektra (/)
          </span>
        </h2>
        <button
          type="button"
          className="mb-0.5 h-[26px] w-[92px] rounded-full border border-[#ff9a1e] bg-linear-to-b from-[#fff6e2] from-10% via-[#ffd892] via-50% to-[#ffa726] to-70% text-[15px] leading-6 font-bold text-[#123a6b] italic"
        >
          Donate
        </button>
      </div>

      <nav className="flex h-[19px] items-center justify-center gap-[21px]">
        <Tool icon={UpdateIcon}>Update</Tool>
        <Tool icon={PdfIcon}>PDF</Tool>
        <Tool icon={HelpIcon}>Online help</Tool>
        <Tool icon={MonitorIcon}>Desktop</Tool>
        <div className="flex gap-2">
          <span>Choice of period :</span>
          <Tool icon={CalendarIcon} kind="day">Day</Tool>
          <Tool icon={CalendarIcon} kind="week">Week</Tool>
          <Tool icon={CalendarIcon} kind="month">Month</Tool>
          <Tool icon={CalendarIcon} kind="year">Year</Tool>
          <Tool icon={CalendarIcon} kind="year">All</Tool>
          <Tool icon={CalendarIcon} kind="year">Customized</Tool>
        </div>
      </nav>
      <button type="button" aria-label="Menu" className="absolute top-[57px] right-0 flex h-[26px] w-7 flex-col items-center justify-center gap-[3px] rounded-l-[4px] bg-[#dcdfdd]">
        <span className="h-[3px] w-[18px] rounded-full bg-[#59625f]" />
        <span className="h-[3px] w-[18px] rounded-full bg-[#59625f]" />
        <span className="h-[3px] w-[18px] rounded-full bg-[#59625f]" />
      </button>

      <div className="grid grid-cols-[repeat(3,auto)] justify-center gap-x-1">
        {CHARTS.map((c) => (
          <Chart key={c.title} chart={c} />
        ))}
      </div>
      <div className="flex h-[18px] items-center justify-end">
        <Toggle>Other charts</Toggle>
      </div>

      <Heading icon={BeaconIcon}>Statistics http - 1 day since midnight</Heading>
      <StatTable data={HTTP} label="Statistics http" />
      <FootLine>
        <span>25 hits/min on 45 requests</span>
        <Toggle>Details</Toggle>
      </FootLine>

      <Heading icon={DatabaseIcon}>Statistics sql - 1 day since midnight</Heading>
      <StatTable data={SQL} label="Statistics sql" />
      <FootLine>
        <span>11,772 hits/min on 360 requests</span>
        <Toggle>Details</Toggle>
      </FootLine>

      <Heading icon={BeanIcon}>Statistics spring - 1 day since midnight</Heading>
      <StatTable data={SPRING} label="Statistics spring" />
      <FootLine>
        <span>1,063 hits/min on 498 requests</span>
        <a href="#summary" className="text-[#a4a4a4]">Summary by class</a>
        <a href="#dependencies" className="text-[#a4a4a4]">Dependencies</a>
        <Toggle>Details</Toggle>
      </FootLine>

      <Heading icon={AlertIcon}>Statistics http system errors - 1 day since midnight</Heading>
      <p className="h-[19px]">None</p>

      <Heading icon={FootstepsIcon}>Statistics system errors logs - 1 day since midnight</Heading>
      <StatTable data={LOGS} label="Statistics system errors logs" />
      <FootLine>
        <span>28 hits/min on 500 errors</span>
        <Toggle>Details</Toggle>
        <Toggle>Last errors</Toggle>
      </FootLine>

      <Heading icon={HourglassIcon}>Current requests</Heading>
      <p className="h-[18px]">None</p>

      <Heading icon={SystemIcon}>System information</Heading>
      <nav>
        <div className="flex h-5 items-center justify-center gap-[21px]">
          <SystemLink icon={BroomIcon}>Execute the garbage collector</SystemLink>
          <SystemLink icon={HeapIcon}>Generate a heap dump</SystemLink>
          <SystemLink icon={MemoryIcon}>View memory histogram</SystemLink>
          <SystemLink icon={BinIcon}>Invalidate http sessions</SystemLink>
          <SystemLink icon={UsersIcon}>View http sessions</SystemLink>
          <SystemLink icon={ClockIcon}>Hotspots</SystemLink>
        </div>
        <div className="flex h-5 items-center justify-center gap-[21px] pl-[21px]">
          <SystemLink icon={DeployIcon}>View deployment descriptor</SystemLink>
          <SystemLink icon={MBeansIcon}>MBeans</SystemLink>
          <SystemLink icon={ProcessIcon}>View OS processes</SystemLink>
          <SystemLink icon={TreeIcon}>JNDI tree</SystemLink>
          <SystemLink icon={BeanIcon}>Spring beans</SystemLink>
          <SystemLink icon={DatabaseIcon}>Opened jdbc connections</SystemLink>
          <SystemLink icon={DatabaseIcon}>Database</SystemLink>
        </div>
      </nav>

      <div className="flex items-end gap-7 pl-0.5">
        <table aria-label="System information" className="text-[11px] leading-3">
          <tbody>
            <tr>
              <td className="py-0.5 pr-1">Host:</td>
              <td className="py-0.5 font-bold">elektra@127.0.1.1</td>
              <td />
            </tr>
            {INFO.map(([lines, value, meter]) => (
              <tr key={lines[0]}>
                <td className="py-0.5 pr-1">
                  {lines.map((l) => (
                    <div key={l}>{l}</div>
                  ))}
                </td>
                <td className="py-0.5">{value}</td>
                <td className="py-0 pl-[13px]">{meter ? <Meter value={meter} label={lines[0]} /> : null}</td>
              </tr>
            ))}
            <tr>
              <td className="py-0.5 pr-1">% System CPU</td>
              <td className="py-0.5">20.75</td>
              <td className="py-0 pl-[13px]">
                <Meter value={21} label="% System CPU" />
              </td>
            </tr>
          </tbody>
        </table>
        <Toggle>Details</Toggle>
      </div>

      <div className="mt-9">
        <Heading icon={GearIcon}>Threads</Heading>
      </div>
    </div>
  );
}

export default function App() {
  return (
    <div className="bg-[#232f3f] px-[7px] font-['Liberation_Sans',Arial,sans-serif]">
      <Gradients />
      <div className="border-2 border-[#505a69] bg-[#2e3a4b]">
        <Header />
        <main className="mr-[3px] ml-3 border-2 border-[#505a69] bg-[#232f3f] pr-1 pl-[5px]">
          <div className="h-[18px] rounded-[5px] bg-white pl-[7px] text-base leading-[18px] font-bold text-[#2f7d1c]">adminmonitoring</div>
          <div className="h-0.5 bg-[#4c5866]" />
          <section className="overflow-hidden rounded-[7px] border-2 border-t-[#969c98] border-r-[#f7f5f5] border-b-[#f7f5f5] border-l-[#b4b8b8]">
            <div className="flex">
              <div className="min-w-0 flex-1 pr-[7px] pb-2 pl-[7px]">
                <h2 className="h-[27px] pt-0.5 text-[11px] leading-[27px] font-bold text-white">Admin Monitoring</h2>
                <div className="flex">
                  <Report />
                  <div className="flex w-[15px] flex-col items-center bg-[#f1f1f1]">
                    <Arrow d={UP} />
                    <div className="w-[11px] flex-[1340] bg-[#c1c1c1]" />
                    <div className="flex-[409]" />
                    <Arrow d={DOWN} fill="#505050" />
                  </div>
                </div>
              </div>
              <div className="flex w-[15px] flex-col justify-between bg-[#f1f1f1]">
                <Arrow d={UP} />
                <Arrow d={DOWN} />
              </div>
            </div>
            <div className="flex h-[15px] bg-[#f1f1f1]">
              <Arrow d={LEFT} />
              <div className="flex-1" />
              <Arrow d={RIGHT} />
              <div className="w-[15px] bg-[#dcdcdc]" />
            </div>
          </section>
        </main>
        <footer className="pb-0.5 pl-[7px] text-[12px] font-bold text-[#c3ccd6]">
          <div className="grid h-4 grid-cols-2 items-center">
            <a href="#main" className="flex items-center gap-1 text-[#2f7d1c]">
              <svg viewBox="0 0 12 12" className="h-3 w-3" aria-hidden="true">
                <path d="M6 0 7.700 4.100 12 4.500 8.700 7.300 9.700 12 6 9.400 2.300 12 3.300 7.300 0 4.500 4.300 4.100z" fill="#2f7d1c" />
              </svg>
              <span className="underline">Main View</span>
            </a>
            <span>Citizen Intelligence Agency (2025-SNAPSHOT)(Apache License 2.0)</span>
          </div>
          <div className="grid h-[34px] grid-cols-3 items-center">
            <span>Open Source</span>
            <a href="https://github.com/Hack23/cia" className="text-[#2f7d1c] underline">https://github.com/Hack23/cia</a>
            <a href="#sbom" className="text-[#2f7d1c] underline">SBOM(spdx)</a>
          </div>
        </footer>
      </div>
      <div className="-mx-[7px] mt-1 h-0.5 bg-[#505a69]" />
    </div>
  );
}
